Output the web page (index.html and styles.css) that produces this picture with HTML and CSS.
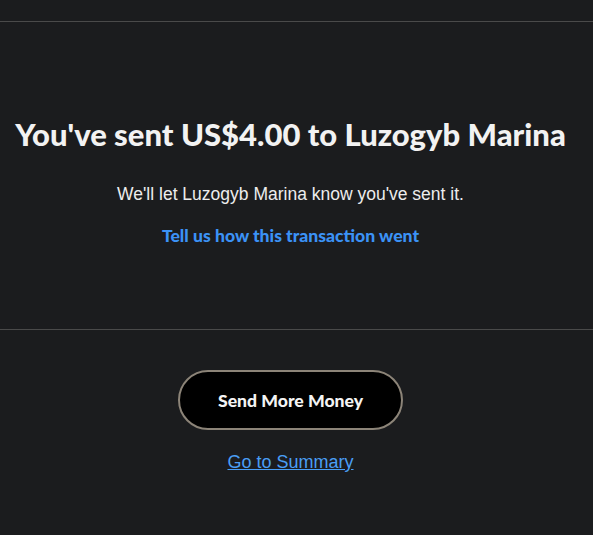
FILE: index.html
```html
<!DOCTYPE html>
<html lang="en">
<head>
<meta charset="utf-8">
<title>Sent</title>
<link rel="stylesheet" href="styles.css">
</head>
<body>
<div class="topbar"></div>
<section class="hero">
  <h1 class="title">You've sent US$4.00 to Luzogyb Marina</h1>
  <p class="note">We'll let Luzogyb Marina know you've sent it.</p>
  <a class="feedback" href="#">Tell us how this transaction went</a>
</section>
<section class="actions">
  <button class="btn-primary" type="button">Send More Money</button>
  <a class="summary" href="#">Go to Summary</a>
</section>
</body>
</html>
```
FILE: styles.css
```css
html, body {
  margin: 0;
  padding: 0;
  background: #1b1c1e;
  color: #eeeeee;
}
body {
  min-height: 535px;
  font-family: "Liberation Sans", Arial, sans-serif;
}
.topbar {
  height: 21px;
  border-bottom: 1px solid #4a4a4a;
}
.hero {
  display: flex;
  flex-direction: column;
  align-items: center;
  padding: 94px 12px 81px 0;
  border-bottom: 1px solid #4a4a4a;
}
.title {
  margin: 0;
  font-family: Lato, sans-serif;
  font-weight: 900;
  font-size: 31px;
  line-height: 36px;
  letter-spacing: 0;
  color: #f2f2f2;
  white-space: nowrap;
}
.note {
  margin: 30px 0 0;
  font-size: 17.5px;
  line-height: 24px;
  color: #ededed;
}
.feedback {
  margin-top: 18px;
  font-family: Lato, sans-serif;
  font-weight: 900;
  font-size: 17.6px;
  line-height: 24px;
  color: #3b92f6;
  text-decoration: none;
}
.actions {
  display: flex;
  flex-direction: column;
  align-items: center;
  padding: 40px 12px 0 0;
}
.btn-primary {
  width: 225px;
  height: 60px;
  border: 2px solid #8c8478;
  border-radius: 30px;
  background: #000;
  color: #f4f4f4;
  font-family: Lato, sans-serif;
  font-weight: 900;
  font-size: 17.6px;
  cursor: pointer;
}
.summary {
  margin-top: 20px;
  font-size: 18px;
  line-height: 24px;
  color: #4a9ef5;
  text-decoration: underline;
}
```
